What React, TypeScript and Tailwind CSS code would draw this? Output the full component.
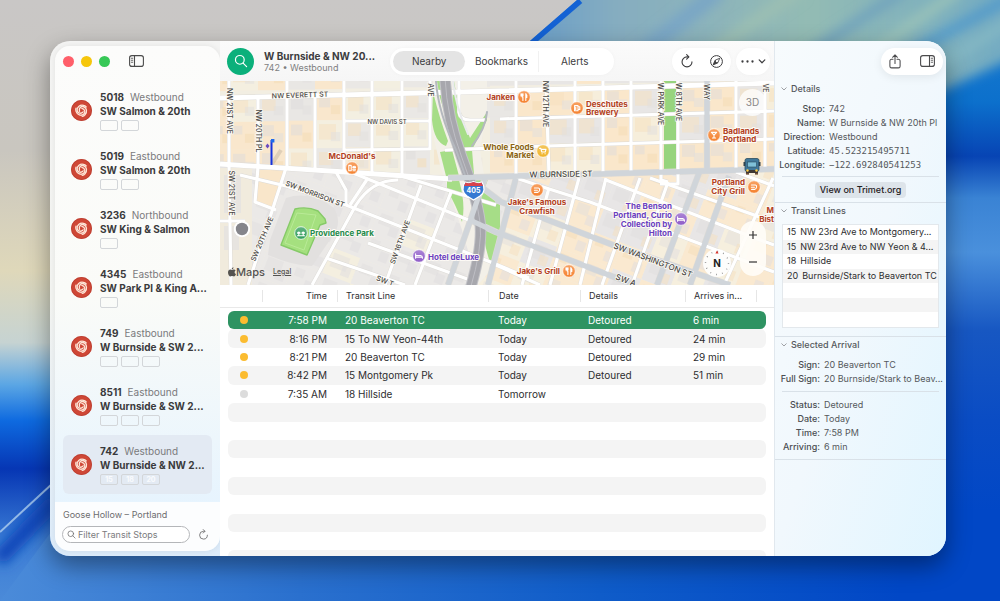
import { useState, type ReactNode } from "react";
import clsx from "clsx";

type Stop = { id: string; direction: string; name: string; lines: string[] };

const stops: Stop[] = [
    { id: "5018", direction: "Westbound", name: "SW Salmon & 20th", lines: ["", ""] },
    { id: "5019", direction: "Eastbound", name: "SW Salmon & 20th", lines: ["", ""] },
    { id: "3236", direction: "Northbound", name: "SW King & Salmon", lines: [""] },
    { id: "4345", direction: "Eastbound", name: "SW Park Pl & King A...", lines: [""] },
    { id: "749", direction: "Eastbound", name: "W Burnside & SW 2...", lines: ["", "", ""] },
    { id: "8511", direction: "Eastbound", name: "W Burnside & SW 2...", lines: ["", "", ""] },
    { id: "742", direction: "Westbound", name: "W Burnside & NW 2...", lines: ["15", "18", "20"] },
];

const arrivals = [
    { time: "7:58 PM", line: "20 Beaverton TC", date: "Today", details: "Detoured", eta: "6 min" },
    { time: "8:16 PM", line: "15 To NW Yeon-44th", date: "Today", details: "Detoured", eta: "24 min" },
    { time: "8:21 PM", line: "20 Beaverton TC", date: "Today", details: "Detoured", eta: "29 min" },
    { time: "8:42 PM", line: "15 Montgomery Pk", date: "Today", details: "Detoured", eta: "51 min" },
    { time: "7:35 AM", line: "18 Hillside", date: "Tomorrow", details: "", eta: "" },
];

const transitLines = [
    ["15", "NW 23rd Ave to Montgomery..."],
    ["15", "NW 23rd Ave to NW Yeon & 4..."],
    ["18", "Hillside"],
    ["20", "Burnside/Stark to Beaverton TC"],
    [],
    [],
    [],
];

/* ---------- icons ---------- */

const RefreshIcon = ({ className }: { className?: string }) => (
    <svg viewBox="0 0 24 24" className={className} fill="none" stroke="currentColor" strokeWidth="1.9" strokeLinecap="round" strokeLinejoin="round">
        <path d="M20.5 13.5A8.5 8.5 0 1 1 12 5h2.6" />
        <path d="M11.4 1.2 15.2 5l-3.8 3.8" />
    </svg>
);

const SearchIcon = ({ className }: { className?: string }) => (
    <svg viewBox="0 0 24 24" className={className} fill="none" stroke="currentColor" strokeWidth="2" strokeLinecap="round">
        <circle cx="10" cy="10" r="7.500" />
        <path d="m15.600 15.600 6 6" />
    </svg>
);

const PanelIcon = ({ side }: { side: "left" | "right" }) => (
    <svg viewBox="0 0 30 24" className={clsx("h-3 w-[15px]", side === "right" && "-scale-x-100")} fill="none" stroke="currentColor" strokeWidth="2.2" strokeLinecap="round">
        <rect x="1.2" y="1.2" width="27.6" height="21.6" rx="4.5" />
        <path d="M11 1.5v21" />
        <path d="M4.6 6.5h3M4.6 10.5h3M4.6 14.5h3" strokeWidth="1.7" />
    </svg>
);

const CompassIcon = () => (
    <svg viewBox="0 0 26 26" className="size-[13px]" fill="none" stroke="currentColor" strokeWidth="2" strokeLinejoin="round">
        <circle cx="13" cy="13" r="11.8" />
        <path d="m19.500 6.500-3.900 9.100-9.100 3.900 3.900-9.100z" strokeWidth="1.7" />
        <path d="m10.400 10.400 5.200 5.200-9.100 3.900z" fill="currentColor" strokeWidth="1" />
        <circle cx="13" cy="13" r="1.300" fill="white" stroke="none" />
    </svg>
);

const ShareIcon = () => (
    <svg viewBox="0 0 24 30" className="h-[15px] w-3" fill="none" stroke="currentColor" strokeWidth="2.1" strokeLinecap="round" strokeLinejoin="round">
        <path d="M8 10.5H5.2a3.4 3.4 0 0 0-3.4 3.4v10.4a3.4 3.4 0 0 0 3.4 3.4h13.6a3.4 3.4 0 0 0 3.4-3.4V13.9a3.4 3.4 0 0 0-3.4-3.4H16" />
        <path d="M12 19V2.2M7.2 6.6 12 1.8l4.8 4.8" />
    </svg>
);

const ChevronIcon = ({ className }: { className?: string }) => (
    <svg viewBox="0 0 12 8" className={className} fill="none" stroke="currentColor" strokeWidth="1.9" strokeLinecap="round" strokeLinejoin="round">
        <path d="m1.500 1.500 4.500 4.500 4.500-4.500" />
    </svg>
);

// Rose badge used for every TriMet stop
const RoseBadge = () => (
    <svg viewBox="0 0 42 42" className="size-[21px] shrink-0">
        <circle cx="21" cy="21" r="21" fill="#cf4736" />
        <circle cx="21" cy="21" r="20" fill="none" stroke="#b53c30" strokeWidth="1.4" />
        <g fill="none" stroke="#fde6d8" strokeWidth="2.700" strokeLinecap="round">
            {[0, 120, 240].map((angle) => (
                <path key={angle} transform={`rotate(${angle} 21 21)`} d="M17 22.500C15 16.500 20 11.500 25.500 13.500 31.500 15.700 33 24 28 29.500 26.500 31.200 24.500 32.300 22.500 32.800" />
            ))}
        </g>
    </svg>
);

/* ---------- wallpaper ---------- */

const Wallpaper = () => (
    <svg viewBox="0 0 1000 601" preserveAspectRatio="none" className="absolute inset-0 size-full" aria-hidden="true">
        <defs>
            <linearGradient id="wall-left" x1="0" y1="0" x2="0" y2="1">
                <stop offset="0" stopColor="#c9c7c6" />
                <stop offset="0.25" stopColor="#c9c6bf" />
                <stop offset="0.45" stopColor="#dfd8ba" />
                <stop offset="0.57" stopColor="#c6d3d2" />
                <stop offset="0.64" stopColor="#5ba6e4" />
                <stop offset="0.7" stopColor="#0e6ae0" />
                <stop offset="0.78" stopColor="#0636b4" />
                <stop offset="0.9" stopColor="#3c7ed6" />
                <stop offset="1" stopColor="#4b8ad8" />
            </linearGradient>
            <linearGradient id="wall-bottom" x1="0" y1="0" x2="1" y2="0">
                <stop offset="0" stopColor="#4b8bd9" />
                <stop offset="0.3" stopColor="#2a70ce" />
                <stop offset="0.6" stopColor="#0f5cc9" />
                <stop offset="0.9" stopColor="#0147c6" />
                <stop offset="1" stopColor="#0147c6" />
            </linearGradient>
            <linearGradient id="wall-right" x1="0" y1="0" x2="0" y2="1">
                <stop offset="0" stopColor="#1f7fce" />
                <stop offset="0.17" stopColor="#0c70cc" />
                <stop offset="0.26" stopColor="#0744b4" />
                <stop offset="0.33" stopColor="#3a83d4" />
                <stop offset="0.42" stopColor="#4a90dc" />
                <stop offset="0.55" stopColor="#1757c2" />
                <stop offset="0.7" stopColor="#0a4cc4" />
                <stop offset="0.85" stopColor="#0147c6" />
                <stop offset="1" stopColor="#0147c6" />
            </linearGradient>
            <linearGradient id="wall-fan" x1="0" y1="0" x2="1" y2="0">
                <stop offset="0" stopColor="#5a96cc" />
                <stop offset="0.25" stopColor="#86adc0" />
                <stop offset="0.6" stopColor="#93bbb4" />
                <stop offset="1" stopColor="#6fa9c4" />
            </linearGradient>
            <filter id="wall-soft" x="-20%" y="-50%" width="140%" height="200%">
                <feGaussianBlur stdDeviation="6" />
            </filter>
            <clipPath id="wall-fan-edge">
                <path d="M577 0H1000V601H900V60H508z" />
            </clipPath>
        </defs>
        <rect width="1000" height="601" fill="url(#wall-left)" />
        <rect x="880" width="120" height="601" fill="url(#wall-right)" />
        <path d="M60 520H1000V601H0z" fill="url(#wall-bottom)" />
        <g clipPath="url(#wall-fan-edge)">
            <path d="M560-20H1030V50L900 110H480z" fill="url(#wall-fan)" filter="url(#wall-soft)" />
            <g filter="url(#wall-soft)" fill="none">
                <path d="M720-10 620 70" stroke="#79a6c6" strokeWidth="16" />
                <path d="M800-10 700 60" stroke="#9cbfb2" strokeWidth="12" />
                <path d="M905-10 800 60" stroke="#6fa2bd" strokeWidth="10" />
                <path d="M960-10 860 60" stroke="#9bc3b8" strokeWidth="10" />
                <path d="M1010-2 880 70" stroke="#4e97cc" strokeWidth="9" />
                <path d="M1010 22 900 90" stroke="#86b9c4" strokeWidth="9" />
            </g>
            <path d="M578-2 506 60" stroke="#1462d4" strokeWidth="13" />
        </g>
        <path d="M0 532 52 484" stroke="#9cc0ea" strokeWidth="2" />
        <path d="M-2 560 56 500" stroke="#0a45b8" strokeWidth="16" filter="url(#wall-soft)" />
    </svg>
);

/* ---------- map ---------- */

// small deterministic hash so the buildings stay put between renders
const noise = (a: number, b: number) => {
    const v = Math.sin(a * 12.9898 + b * 78.233) * 43758.5453;
    return v - Math.floor(v);
};

const northColumns = [214, 229, 258, 287, 315, 344, 372, 402, 430, 490, 516, 546, 575, 603, 631, 661, 678, 707, 736, 765, 790];
const northRows = [60, 92, 119, 147, 176];

const blockFill = (x: number, r: number) => {
    if (x > 500) return r < 0.6 ? "#fae7cb" : r < 0.75 ? "#f6eedb" : "#e8e6e5";
    if (x > 330 && x < 480) return r < 0.55 ? "#eae8e5" : r < 0.9 ? "#f3efe1" : "#f8ecd8";
    return r < 0.42 ? "#f9e7cd" : r < 0.7 ? "#e9e7e4" : "#f4efe0";
};

const NorthBlocks = () => (
    <g>
        {northColumns.slice(0, -1).flatMap((x, c) =>
            northRows.slice(0, -1).map((y, r) => {
                const w = northColumns[c + 1] - x;
                const top = y - (x - 220) * 0.02 + 3;
                const n = noise(c, r);
                const fill = blockFill(x, n);
                return (
                    <g key={`${c}-${r}`}>
                        <rect x={x} y={top} width={w} height="28" fill={fill} />
                        <rect x={x + 4} y={top + 4} width={w * (0.3 + n * 0.3)} height={8 + n * 8} fill={n > 0.5 ? "#f5dfbd" : "#dedcdb"} opacity="0.5" />
                        <rect x={x + w * 0.55} y={top + 12} width={w * 0.32} height={9} fill={n > 0.35 ? "#e2e0de" : "#f4dcb7"} opacity="0.55" />
                    </g>
                );
            })
        )}
    </g>
);

const SouthBlocks = () => (
    <g transform="rotate(21 496 200)">
        {Array.from({ length: 22 }).flatMap((_, c) =>
            Array.from({ length: 12 }).map((_, r) => {
                const x = 180 + c * 30;
                const y = 60 + r * 27;
                const n = noise(c + 3, r + 7);
                const eastern = x > 480;
                const fill = eastern ? (n < 0.5 ? "#fae9d0" : n < 0.7 ? "#f6efde" : "#e8e6e6") : n < 0.85 ? "#ebe9e7" : "#f4efe0";
                return (
                    <g key={`${c}-${r}`}>
                        <rect x={x} y={y} width="30" height="27" fill={fill} />
                        <rect x={x + 4} y={y + 4} width={8 + n * 10} height={7 + n * 8} fill={n < 0.4 && eastern ? "#f5dcb6" : "#dfdddd"} opacity="0.45" />
                        <rect x={x + 17} y={y + 13} width="9" height="10" fill={n > 0.6 && eastern ? "#f5dfbd" : "#e0dee0"} opacity="0.5" />
                    </g>
                );
            })
        )}
    </g>
);

const whiteRoads = [
    "M229 81V164L231 285", "M258 97V165", "M287 81V167", "M315 97V170", "M344 81V172", "M372 81V175", "M402 81V177", "M430 81V150",
    "M516 81V176", "M546 81 549 175", "M575 81V174", "M603 81V173", "M631 81V172", "M661 81V180L668 182", "M678 81V184H660", "M736 81V169", "M765 81V168",
    "M344 121H430", "M344 150 430 149", "M445 150 546 146 774 139", "M500 119 774 111", "M459 81V112Q460 120 470 120H486",
    "M258 167 255 202 276 210 M220 221H245 M240 175 286 186 346 205 498 265 529 278",
    "M353 173 498 232", "M401 176 496 205", "M326 258 405 285", "M368 243 470 280", "M346 205V190L336 172",
    "M286 168 248 285", "M398 180Q372 180 356 205L312 285", "M421 185 385 285", "M451 192 415 285", "M368 178 350 205",
    "M549 188 522 285", "M579 178 550 285", "M606 178 580 285", "M640 178 602 285", "M668 182 632 285", "M773 178 724 285",
    "M516 178 546 188 590 202 690 240 774 272", "M606 180 739 232 774 245", "M650 178 774 222", "M736 172 774 186", "M496 265 540 285",
];

const majorRoads = [
    "M448 178 774 169", "M707 81V170", "M516 178 488 285", "M485 178 448 285", "M699 173 657 285", "M729 176 690 285",
    "M496 200 613 245 730 285", "M480 186 500 201", "M470 220 496 232 635 285",
];

type StreetProps = { x: number; y: number; angle?: number; size?: string; children: string };

const Street = ({ x, y, angle = 0, size = "text-[7px]", children }: StreetProps) => (
    <text x={x} y={y} transform={`rotate(${angle} ${x} ${y})`} textAnchor="middle" dominantBaseline="central" className={clsx(size, "fill-[#494744] font-medium")} stroke="#fbf9f3" strokeWidth="1.6" paintOrder="stroke">
        {children}
    </text>
);

const food = "#f5822f";
const glyphs: Record<string, ReactNode> = {
    fork: <path d="M-2-3.2v2.4q0 1 .9 1V3.4M-3-3.2V-1M-1-3.2V-1M1.8-3.3V3.4M1.8-3.3q1.6 1.4 1 3.8h-1" />,
    burger: <path d="M-3.200-2.600V2.800H-.800V-2.600zM.800-.400q0-1.400 1.400-1.400t1.400 1.400zM.700 1.200H3.500M1 2.800H3.300" />,
    mug: <path d="M-2.4-2.4H1V2.8h-3.4zM1-1.2h1.8V1.4H1M-1.2-.6v2" />,
    cart: <path d="M-3.4-2.6h1.2l1 3.6h3.4l.8-2.6h-4.4M-1 2.8h.2M2 2.8h.2" />,
    plate: <path d="M-2.6-2h4q1.4.2 1.2 2T.6 2.4h-3M-2.6.2h3" />,
    cocktail: <path d="M-2.6-2.6h5.2L0 .2zM0 .2v2.8M-1.6 3h3.2" />,
    bed: <path d="M-3.4-2.2v4.4M-3.4 1.2h6.8v1M-3.4-.4h5q1.8.2 1.8 1.6" />,
    tree: <path d="M-2.2 2.8V0M2.2 2.8V0M-3.4.2a1.2 1.2 0 1 1 2.4 0zM1 .2a1.2 1.2 0 1 1 2.4 0zM-3.6 2.8h7.2" />,
};

type PlaceProps = { x: number; y: number; glyph: string; color: string; ink: string; labels: [number, number, string][]; anchor?: "start" | "middle" | "end" };

const Place = ({ x, y, glyph, color, ink, labels, anchor = "start" }: PlaceProps) => (
    <g>
        <circle cx={x} cy={y} r="6.3" fill={color} stroke="#ffffff" strokeWidth="0.8" />
        <circle cx={x} cy={y} r="5.9" fill="url(#dot-gloss)" />
        <g transform={`translate(${x} ${y})`} fill="none" stroke="#ffffff" strokeWidth="1.1" strokeLinecap="round" strokeLinejoin="round">
            {glyphs[glyph]}
        </g>
        {labels.map(([lx, ly, text]) => (
            <text key={text} x={lx} y={ly} textAnchor={anchor} dominantBaseline="central" fill={ink} stroke="#fdfaf5" strokeWidth="1.8" paintOrder="stroke" className="text-[8px] font-bold">
                {text}
            </text>
        ))}
    </g>
);

const MapDrawing = () => (
    <svg viewBox="220 81 554 204" preserveAspectRatio="xMidYMid slice" className="absolute inset-0 size-full" role="img" aria-label="Map of Goose Hollow, Portland">
        <defs>
            <clipPath id="north">
                <path d="M220 81H774V168L448 178 345 172 220 163z" />
            </clipPath>
            <linearGradient id="dot-gloss" x1="0" y1="0" x2="0" y2="1">
                <stop offset="0" stopColor="#ffffff" stopOpacity="0.25" />
                <stop offset="1" stopColor="#ffffff" stopOpacity="0" />
            </linearGradient>
        </defs>
        <rect x="220" y="81" width="554" height="204" fill="#f2eee2" />
        <SouthBlocks />
        <g clipPath="url(#north)">
            <rect x="220" y="81" width="554" height="100" fill="#f2eee2" />
            <NorthBlocks />
        </g>
        <path d="M220 168H252V285H220z" fill="#f1ebdd" />
        <path d="M224 175h17v38h-17zM224 226h15v24h-15z" fill="#e7e4e0" />
        <path d="M258 170H284L274 208 256 202z" fill="#f9e6ca" />
        <path d="M286 198Q310 190 334 208 342 222 334 234L312 266Q294 266 268 255L270 240z" fill="#e2e0df" />

        {/* freeway corridor */}
        <path d="M433 81H487V112L480 150 498 262 478 285 462 230 440 165 432 130z" fill="#f3f0e8" />
        <path d="M433 92Q440 120 448 141L446 146Q434 142 432 120zM437 81H443L452 120 462 150 458 140Q440 110 437 81zM454 81Q458 110 470 138L487 112V120L472 150 474 174H466L450 130z" fill="#a6dd87" />
        <path d="M440 152 452 150 459 176H446zM447 178 459 180Q466 205 462 222 456 205 447 190zM474 174H490L484 190 500 205 500 250 490 262Q482 240 484 218z" fill="#a6dd87" />
        <path d="M664 81H676V169H664z" fill="#97d47e" />

        <g fill="none" stroke="#dcdad6" strokeLinejoin="round">
            {whiteRoads.map((d) => <path key={d} d={d} strokeWidth="4" />)}
            {majorRoads.map((d) => <path key={d} d={d} strokeWidth="6.4" />)}
            <path d="M220 98 500 91 774 83M220 164 345 172 452 179" strokeWidth="5.6" />
        </g>
        <g fill="none" stroke="#ffffff" strokeWidth="3.2" strokeLinejoin="round">
            {whiteRoads.map((d) => <path key={d} d={d} />)}
            <path d="M220 98 500 91 774 83M220 164 345 172 452 179" strokeWidth="4.8" />
        </g>
        <g fill="none" strokeLinecap="round">
            <path d="M445 78Q447 118 462 158T480 222 470 290" stroke="#c4c4c8" strokeWidth="11.5" />
            <path d="M445 78Q447 118 462 158T480 222 470 290" stroke="#a7a7ad" strokeWidth="9.5" />
            <path d="M445 78Q447 118 462 158T480 222 470 290" stroke="#c4c4ca" strokeWidth="0.8" />
            <path d="M436 81Q438 112 456 150L466 178M487 112Q486 128 472 146" stroke="#b4b8be" strokeWidth="2" />
            <path d="M453 81Q455 105 468 134" stroke="#e9eaec" strokeWidth="2" />
        </g>
        <g fill="none" stroke="#d0d5da" strokeWidth="5.2">
            {majorRoads.map((d) => <path key={d} d={d} />)}
        </g>

        {/* stadium */}
        <path d="M295 209Q307 206 318 211L325 219 326 223 320 225 307 255 281 245z" fill="#a5e07f" stroke="#86ca68" strokeWidth="1.4" strokeLinejoin="round" />
        <path d="M297 213 316 215 304 250 285 243z" fill="none" stroke="#b9ea97" strokeWidth="1" />

        <Street x={300} y={95} angle={-2}>NW EVERETT ST</Street>
        <Street x={387} y={121} size="text-[6px]">NW DAVIS ST</Street>
        <Street x={229} y={111} angle={90}>NW 21ST AVE</Street>
        <Street x={258} y={131} angle={90}>NW 20TH PL</Street>
        <Street x={231} y={193} angle={90}>SW 21ST AVE</Street>
        <Street x={315} y={194} angle={21}>SW MORRISON ST</Street>
        <Street x={262} y={239} angle={-67}>SW 20TH AVE</Street>
        <Street x={400} y={242} angle={-70}>SW 16TH AVE</Street>
        <Street x={430} y={90} angle={90}>AVE</Street>
        <Street x={545} y={104} angle={90}>NW 12TH AVE</Street>
        <Street x={660} y={104} angle={90}>W PARK AVE</Street>
        <Street x={678} y={102} angle={90}>W 8TH AVE</Street>
        <Street x={706} y={92} angle={90}>WAY</Street>
        <Street x={765} y={88} angle={90}>VE</Street>
        <Street x={561} y={174} angle={-1} size="text-[8px]">W BURNSIDE ST</Street>
        <Street x={653} y={260} angle={21} size="text-[8px]">SW WASHINGTON ST</Street>
        <Street x={626} y={280} angle={21} size="text-[8px]">SW A</Street>
        <Street x={385} y={281} angle={21}>SW T</Street>

        {/* interstate shield */}
        <path d="M465 182Q469 184 473.500 181.500 478 184 482 182 487 191 480 196L473.500 200 467 196Q460 191 465 182z" fill="#3679d2" stroke="#ffffff" strokeWidth="1.2" />
        <path d="M465.500 182.500Q469 184 473.500 182 478 184 481.500 182.500L483 186H464z" fill="#d9434b" />
        <text x={473.5} y={190} textAnchor="middle" dominantBaseline="central" className="fill-white text-[7px] font-bold">405</text>

        <Place x={524} y={97} glyph="fork" color={food} ink="#b24022" anchor="end" labels={[[515, 97, "Janken"]]} />
        <Place x={577} y={108} glyph="mug" color={food} ink="#b24022" labels={[[586, 104, "Deschutes"], [586, 112, "Brewery"]]} />
        <Place x={543} y={151} glyph="cart" color="#f0b429" ink="#8a6412" anchor="end" labels={[[534, 147, "Whole Foods"], [534, 155, "Market"]]} />
        <Place x={352} y={168} glyph="burger" color={food} ink="#b24022" anchor="middle" labels={[[352, 156, "McDonald's"]]} />
        <Place x={714} y={135} glyph="cocktail" color={food} ink="#b24022" labels={[[723, 131, "Badlands"], [723, 139, "Portland"]]} />
        <Place x={754} y={187} glyph="plate" color={food} ink="#b24022" anchor="end" labels={[[745, 182, "Portland"], [745, 191, "City Grill"]]} />
        <Place x={537} y={190} glyph="plate" color={food} ink="#b24022" anchor="middle" labels={[[537, 202, "Jake's Famous"], [537, 211, "Crawfish"]]} />
        <Place x={569} y={271} glyph="fork" color={food} ink="#b24022" anchor="end" labels={[[560, 271, "Jake's Grill"]]} />
        <Place x={681} y={219} glyph="bed" color="#8f5cc8" ink="#6a3fc0" anchor="end" labels={[[672, 206, "The Benson"], [672, 215, "Portland, Curio"], [672, 224, "Collection by"], [672, 233, "Hilton"]]} />
        <Place x={419} y={256} glyph="bed" color="#8f5cc8" ink="#6a3fc0" labels={[[428, 257, "Hotel deLuxe"]]} />
        <Place x={301} y={233} glyph="tree" color="#2f9c5a" ink="#1f8a4c" labels={[[310, 233, "Providence Park"]]} />
        <g className="text-[8px] font-bold" fill="#b24022" stroke="#fdfaf5" strokeWidth="1.8" paintOrder="stroke" textAnchor="end">
            <text x={774} y={210} dominantBaseline="central">M</text>
            <text x={774} y={219} dominantBaseline="central">Bist</text>
        </g>

        {/* selected stop flag */}
        <path d="M272 164 281 150" stroke="#000000" strokeOpacity="0.1" strokeWidth="4" />
        <path d="M271.500 140V165" stroke="#1733dd" strokeWidth="2" />
        <path d="M271 139h3.400v3.400H271z" fill="#1f6bea" />
        <path d="m267.500 143.500 2 2.500-2 2.500-2-2.500z" fill="#6a4bc0" />

        {/* vehicle */}
        <g>
            <rect x="745" y="158.500" width="14" height="13" rx="2" fill="#41789a" stroke="#2b4c60" strokeWidth="0.8" />
            <rect x="747.500" y="162" width="9" height="5" fill="#7fc0d8" stroke="#2b4c60" strokeWidth="0.6" />
            <rect x="743.500" y="162" width="1.800" height="4" fill="#30434f" />
            <rect x="758.700" y="162" width="1.800" height="4" fill="#30434f" />
            <rect x="746" y="170" width="12" height="3" fill="#3d3733" />
            <circle cx="747.500" cy="170.500" r="1.200" fill="#ffcf4a" />
            <circle cx="756.500" cy="170.500" r="1.200" fill="#ffcf4a" />
            <rect x="746" y="173" width="3" height="1.600" fill="#6a4b38" />
            <rect x="755" y="173" width="3" height="1.600" fill="#6a4b38" />
        </g>

        <circle cx="242" cy="229" r="8.200" fill="#ffffff" />
        <circle cx="242" cy="229" r="6.200" fill="#85858b" />
    </svg>
);

const MapView = () => (
    <section className="relative h-[204px] shrink-0 overflow-hidden">
        <MapDrawing />
        <button className="absolute right-2 top-2 size-[27px] rounded-full bg-white/75 text-[10px] text-[#88878a]">3D</button>
        <div className="absolute bottom-[9px] right-2 flex h-[55px] w-[26px] flex-col rounded-full bg-[#fffdf8]/90 text-[#333]">
            <button aria-label="Zoom in" className="flex flex-1 items-center justify-center">
                <svg viewBox="0 0 8 8" className="size-2" stroke="currentColor" strokeWidth="1.2"><path d="M0 4h8M4 0v8" /></svg>
            </button>
            <button aria-label="Zoom out" className="flex flex-1 items-center justify-center">
                <svg viewBox="0 0 8 8" className="size-2" stroke="currentColor" strokeWidth="1.2"><path d="M0 4h8" /></svg>
            </button>
        </div>
        <button aria-label="Face north" className="absolute bottom-2 right-[43px] flex size-7 items-center justify-center rounded-full bg-white/90 text-[10px] font-bold text-[#222]">
            <svg viewBox="0 0 28 28" className="absolute inset-0 size-7" fill="none">
                <circle cx="14" cy="14" r="11.500" stroke="#8a8a8a" strokeWidth="1.4" strokeDasharray="0.8 5.220" />
                <path d="m14 1.600 1.600 2.800h-3.200z" fill="#d8342b" />
            </svg>
            <span className="relative">N</span>
        </button>
        <div className="absolute bottom-1.5 left-2 flex items-center text-[#55534f]">
            <svg viewBox="0 0 16 19" className="h-2.5 w-2" fill="currentColor">
                <path d="M11 0c.2 2.200-1.700 4.200-3.600 4.100C7.200 2.100 9.100.2 11 0z" />
                <path d="M8 5.300c1 0 2-.9 3.700-.9 1.300 0 2.700.7 3.600 1.900-3.100 1.900-2.600 5.900.7 7.200-.9 2.300-2.500 5-4.300 5-1.400 0-1.800-.8-3.400-.8s-2.100.8-3.400.8C2.600 18.500 0 13.900 0 10.300c0-3.700 2.300-5.800 4.700-5.800 1.400 0 2.400.8 3.300.8z" />
            </svg>
            <span className="text-[11px] leading-[14px] font-medium">Maps</span>
            <a href="#legal" className="ml-2 text-[7px] font-medium underline">Legal</a>
        </div>
    </section>
);

/* ---------- sidebar ---------- */

const Sidebar = () => {
    const [selected, setSelected] = useState("742");
    return (
        <aside className="flex w-[170px] shrink-0 flex-col py-[5px] pl-[5px]">
            <div className="flex flex-1 flex-col overflow-hidden rounded-[15px] bg-linear-to-b from-[#fcfcfb] via-[#fafbf8] to-[#e2f2ff] shadow-[0_0_6px_rgba(0,0,0,0.08)]">
                <div className="flex h-[30px] items-center gap-[7px] pl-2 text-[#4b4b4b]">
                    <button aria-label="Close" className="size-[11px] rounded-full bg-[#ff5f6a]" />
                    <button aria-label="Minimize" className="size-[11px] rounded-full bg-[#f6c60b]" />
                    <button aria-label="Zoom" className="size-[11px] rounded-full bg-[#37c857]" />
                    <button aria-label="Hide sidebar" className="ml-3"><PanelIcon side="left" /></button>
                </div>
                <ul className="flex-1 px-2 pt-[5px]">
                    {stops.map((stop) => (
                        <li key={stop.id}>
                            <button
                                onClick={() => setSelected(stop.id)}
                                className={clsx("flex h-[59px] w-full items-center gap-2 rounded-md pl-2 text-left", selected === stop.id && "bg-[#e3eaf3]")}
                            >
                                <RoseBadge />
                                <span className="flex flex-col text-[10px] leading-[14px]">
                                    <span className="flex gap-1.5">
                                        <b className="font-bold text-[#3a3a3c]">{stop.id}</b>
                                        <span className="text-[#7a7a7c]">{stop.direction}</span>
                                    </span>
                                    <b className="font-bold whitespace-nowrap text-[#3a3a3c]">{stop.name}</b>
                                    <span className="mt-0.5 flex gap-[3px]">
                                        {stop.lines.map((line, i) => (
                                            <span key={i} className="h-[11px] w-[18px] rounded-xs border border-[#d3d6d9] text-center text-[7px] leading-[9px] font-bold text-white/80">{line}</span>
                                        ))}
                                    </span>
                                </span>
                            </button>
                        </li>
                    ))}
                </ul>
                <footer className="flex h-[49px] flex-col gap-1 bg-[#fcfdfe] px-[7px] pt-1.5 text-[#6c6c6e]">
                    <p className="pl-px text-[9px] leading-[14px]">Goose Hollow – Portland</p>
                    <div className="flex items-center gap-2">
                        <label className="flex h-[17px] w-32 items-center gap-0.5 rounded-full border border-[#b4b6b9] bg-white pl-1">
                            <SearchIcon className="size-[9px] shrink-0" />
                            <input type="text" aria-label="Filter transit stops" placeholder="Filter Transit Stops" className="w-full min-w-0 bg-transparent text-[9px] outline-none placeholder:text-[#7b7b7d]" />
                        </label>
                        <button aria-label="Reload stops"><RefreshIcon className="size-[11px]" /></button>
                    </div>
                </footer>
            </div>
        </aside>
    );
};

/* ---------- toolbar ---------- */

const tabs = ["Nearby", "Bookmarks", "Alerts"];

const Toolbar = () => {
    const [tab, setTab] = useState("Nearby");
    return (
        <header className="flex h-10 shrink-0 items-center bg-linear-to-b from-[#fbfbfb] to-[#f6f6f6] pl-[7px] pr-1 text-[#3c3c3e]">
            <button aria-label="Search" className="flex size-[27px] shrink-0 items-center justify-center rounded-full bg-[#0bb07b] text-white">
                <SearchIcon className="size-[14px]" />
            </button>
            <div className="ml-2.5 w-[126px]">
                <h1 className="text-[10px] leading-[12px] font-bold whitespace-nowrap">W Burnside &amp; NW 20...</h1>
                <p className="text-[9px] leading-[11px] text-[#7f7f81]">742 • Westbound</p>
            </div>
            <nav className="flex h-[27px] w-[224px] rounded-full bg-white p-[3px] text-[10px] shadow-[0_0_4px_rgba(0,0,0,0.03)]">
                {tabs.map((name) => (
                    <button
                        key={name}
                        onClick={() => setTab(name)}
                        className={clsx("flex-1", tab === name ? "rounded-full bg-[#e4e4e4]" : "not-last:border-r not-last:border-[#f1f1f1]")}
                    >
                        {name}
                    </button>
                ))}
            </nav>
            <div className="ml-auto flex h-[27px] w-[59px] items-center justify-around rounded-full bg-white shadow-[0_0_4px_rgba(0,0,0,0.03)]">
                <button aria-label="Refresh"><RefreshIcon className="size-[14px]" /></button>
                <button aria-label="Locate"><CompassIcon /></button>
            </div>
            <button aria-label="More" className="ml-[5px] flex h-[27px] w-[34px] items-center justify-center gap-1 rounded-full bg-white shadow-[0_0_4px_rgba(0,0,0,0.03)]">
                <svg viewBox="0 0 26 6" className="h-[3px] w-[13px]" fill="currentColor">
                    <circle cx="3" cy="3" r="2.300" /><circle cx="13" cy="3" r="2.300" /><circle cx="23" cy="3" r="2.300" />
                </svg>
                <ChevronIcon className="h-[5px] w-2" />
            </button>
        </header>
    );
};

/* ---------- arrivals ---------- */

const headings = [
    { name: "Time", className: "text-right pr-2.5" },
    { name: "Transit Line", className: "pl-2" },
    { name: "Date", className: "pl-2.5" },
    { name: "Details", className: "pl-2" },
    { name: "Arrives in...", className: "pl-2" },
];

const Arrivals = () => (
    <section className="relative min-h-0 flex-1 overflow-hidden bg-white px-2 text-[#2d2d2f] before:absolute before:inset-x-0 before:top-[22px] before:h-px before:bg-[#e9e9e9]">
        <table className="w-full table-fixed border-separate border-spacing-0">
            <colgroup>
                <col className="w-[34px]" />
                <col className="w-[75px]" />
                <col />
                <col className="w-[92px]" />
                <col className="w-[105px]" />
                <col className="w-[71px]" />
                <col className="w-[10px]" />
            </colgroup>
            <thead className="text-[9px]">
                <tr className="h-[22px]">
                    <td />
                    {headings.map((heading) => (
                        <th key={heading.name} scope="col" className="p-0 text-left font-normal">
                            <span className={clsx("block border-l border-[#e6e6e6] leading-[12px] whitespace-nowrap", heading.className)}>{heading.name}</span>
                        </th>
                    ))}
                    <td className="p-0"><span className="block h-3 border-l border-[#e6e6e6]" /></td>
                </tr>
                <tr className="h-1"><td className="p-0" /></tr>
            </thead>
        </table>
        <table className="h-[258px] w-full table-fixed border-separate border-spacing-0 text-[10px] leading-[14px]">
            <colgroup>
                <col className="w-[34px]" />
                <col className="w-[75px]" />
                <col />
                <col className="w-[92px]" />
                <col className="w-[105px]" />
                <col className="w-[81px]" />
            </colgroup>
            <tbody>
                {Array.from({ length: 14 }).map((_, i) => {
                    const arrival = arrivals[i];
                    return (
                        <tr
                            key={i}
                            className={clsx(
                                "*:p-0 *:first:rounded-l-md *:last:rounded-r-md",
                                i === 0 && "*:bg-[#2e9362] text-white",
                                i % 2 === 1 && "*:bg-[#f4f4f4]"
                            )}
                        >
                            <td>
                                {arrival && <span className={clsx("ml-3 block size-2 rounded-full", arrival.date === "Today" ? "bg-[#fbbc30]" : "bg-[#dcdcdc]")} />}
                            </td>
                            <td className="text-right"><span className="pr-2.5">{arrival?.time}</span></td>
                            <td><span className="pl-2">{arrival?.line}</span></td>
                            <td><span className="pl-2.5">{arrival?.date}</span></td>
                            <td><span className="pl-2">{arrival?.details}</span></td>
                            <td><span className="pl-2">{arrival?.eta}</span></td>
                        </tr>
                    );
                })}
            </tbody>
        </table>
    </section>
);

/* ---------- inspector ---------- */

const Heading = ({ children }: { children: string }) => (
    <h2 className="flex h-4 items-center gap-1 pl-1.5">
        <ChevronIcon className="h-1 w-1.5 text-[#9a9ca0]" />
        <button className="font-medium text-[#55585c]">{children}</button>
    </h2>
);

const Fields = ({ rows, labelWidth }: { rows: [string, string, boolean?][]; labelWidth: string }) => (
    <dl className="-ml-1">
        {rows.map(([label, value, mono]) => (
            <div key={label} className="flex gap-1 leading-[14px] whitespace-nowrap">
                <dt className={clsx(labelWidth, "shrink-0 text-right font-medium text-[#4b4e52]")}>{label}:</dt>
                <dd className={clsx("text-[#55585c]", mono && "font-['DejaVu_Sans_Mono',monospace]")}>{value}</dd>
            </div>
        ))}
    </dl>
);

const Inspector = () => (
    <aside className="w-[172px] shrink-0 overflow-hidden border-l border-[#e1e8ee] bg-linear-to-br from-[#f7fbfd] via-[#f1f8fd] to-[#e0f5ff] text-[9px]">
        <div className="flex h-10 items-center justify-end pr-[3px]">
            <div className="flex h-[27px] w-[62px] items-center justify-between rounded-full bg-white px-2 text-[#4b4b4d] shadow-[0_2px_10px_rgba(0,0,0,0.08)]">
                <button aria-label="Share"><ShareIcon /></button>
                <button aria-label="Hide inspector"><PanelIcon side="right" /></button>
            </div>
        </div>

        <section className="border-b border-[#d9e1e8]">
            <Heading>Details</Heading>
            <div className="mx-[7px] border-b border-[#d9e1e8] pt-[5px] pb-1">
                <Fields
                    labelWidth="w-[47px]"
                    rows={[
                        ["Stop", "742"],
                        ["Name", "W Burnside & NW 20th Pl"],
                        ["Direction", "Westbound"],
                        ["Latitude", "45.523215495711", true],
                        ["Longitude", "−122.692840541253", true],
                    ]}
                />
            </div>
            <div className="flex justify-center pt-[5px] pb-1">
                <button className="h-4 w-[91px] rounded-[4px] bg-[#dde4ea] font-medium text-[#1f2022]">View on Trimet.org</button>
            </div>
        </section>

        <section className="border-b border-[#d9e1e8]">
            <Heading>Transit Lines</Heading>
            <ul className="mx-[7px] mt-[5px] mb-2 flex h-[104px] flex-col border border-[#e3e8ec] bg-white text-[#2d2d2f]">
                {transitLines.map(([line, name], i) => (
                    <li key={i} className="flex flex-1 items-center gap-1 pl-1 leading-[14px] whitespace-nowrap even:bg-[#f4f4f4]">
                        <span>{line}</span>
                        <span>{name}</span>
                    </li>
                ))}
            </ul>
        </section>

        <section className="border-b border-[#d9e1e8] pb-[5px]">
            <Heading>Selected Arrival</Heading>
            <div className="mx-[7px] border-b border-[#d9e1e8] pt-[5px] pb-[5px]">
                <Fields labelWidth="w-[42px]" rows={[["Sign", "20 Beaverton TC"], ["Full Sign", "20 Burnside/Stark to Beav..."]]} />
            </div>
            <div className="mx-[7px] pt-1.5">
                <Fields labelWidth="w-[42px]" rows={[["Status", "Detoured"], ["Date", "Today"], ["Time", "7:58 PM"], ["Arriving", "6 min"]]} />
            </div>
        </section>
    </aside>
);

export default function App() {
    return (
        <div className="relative flex h-screen min-h-[601px] overflow-hidden pt-[41px] pr-[54px] pb-[45px] pl-[50px] font-['Inter','Liberation_Sans',sans-serif]">
            <Wallpaper />
            <main className="relative flex flex-1 overflow-hidden rounded-[20px] bg-linear-to-b from-[#f4f4f3] via-[#f3f4f1] to-[#dcebfa] shadow-[0_10px_25px_rgba(0,0,0,0.4)]">
                <Sidebar />
                <div className="flex min-w-0 flex-1 flex-col">
                    <Toolbar />
                    <MapView />
                    <Arrivals />
                </div>
                <Inspector />
            </main>
        </div>
    );
}
